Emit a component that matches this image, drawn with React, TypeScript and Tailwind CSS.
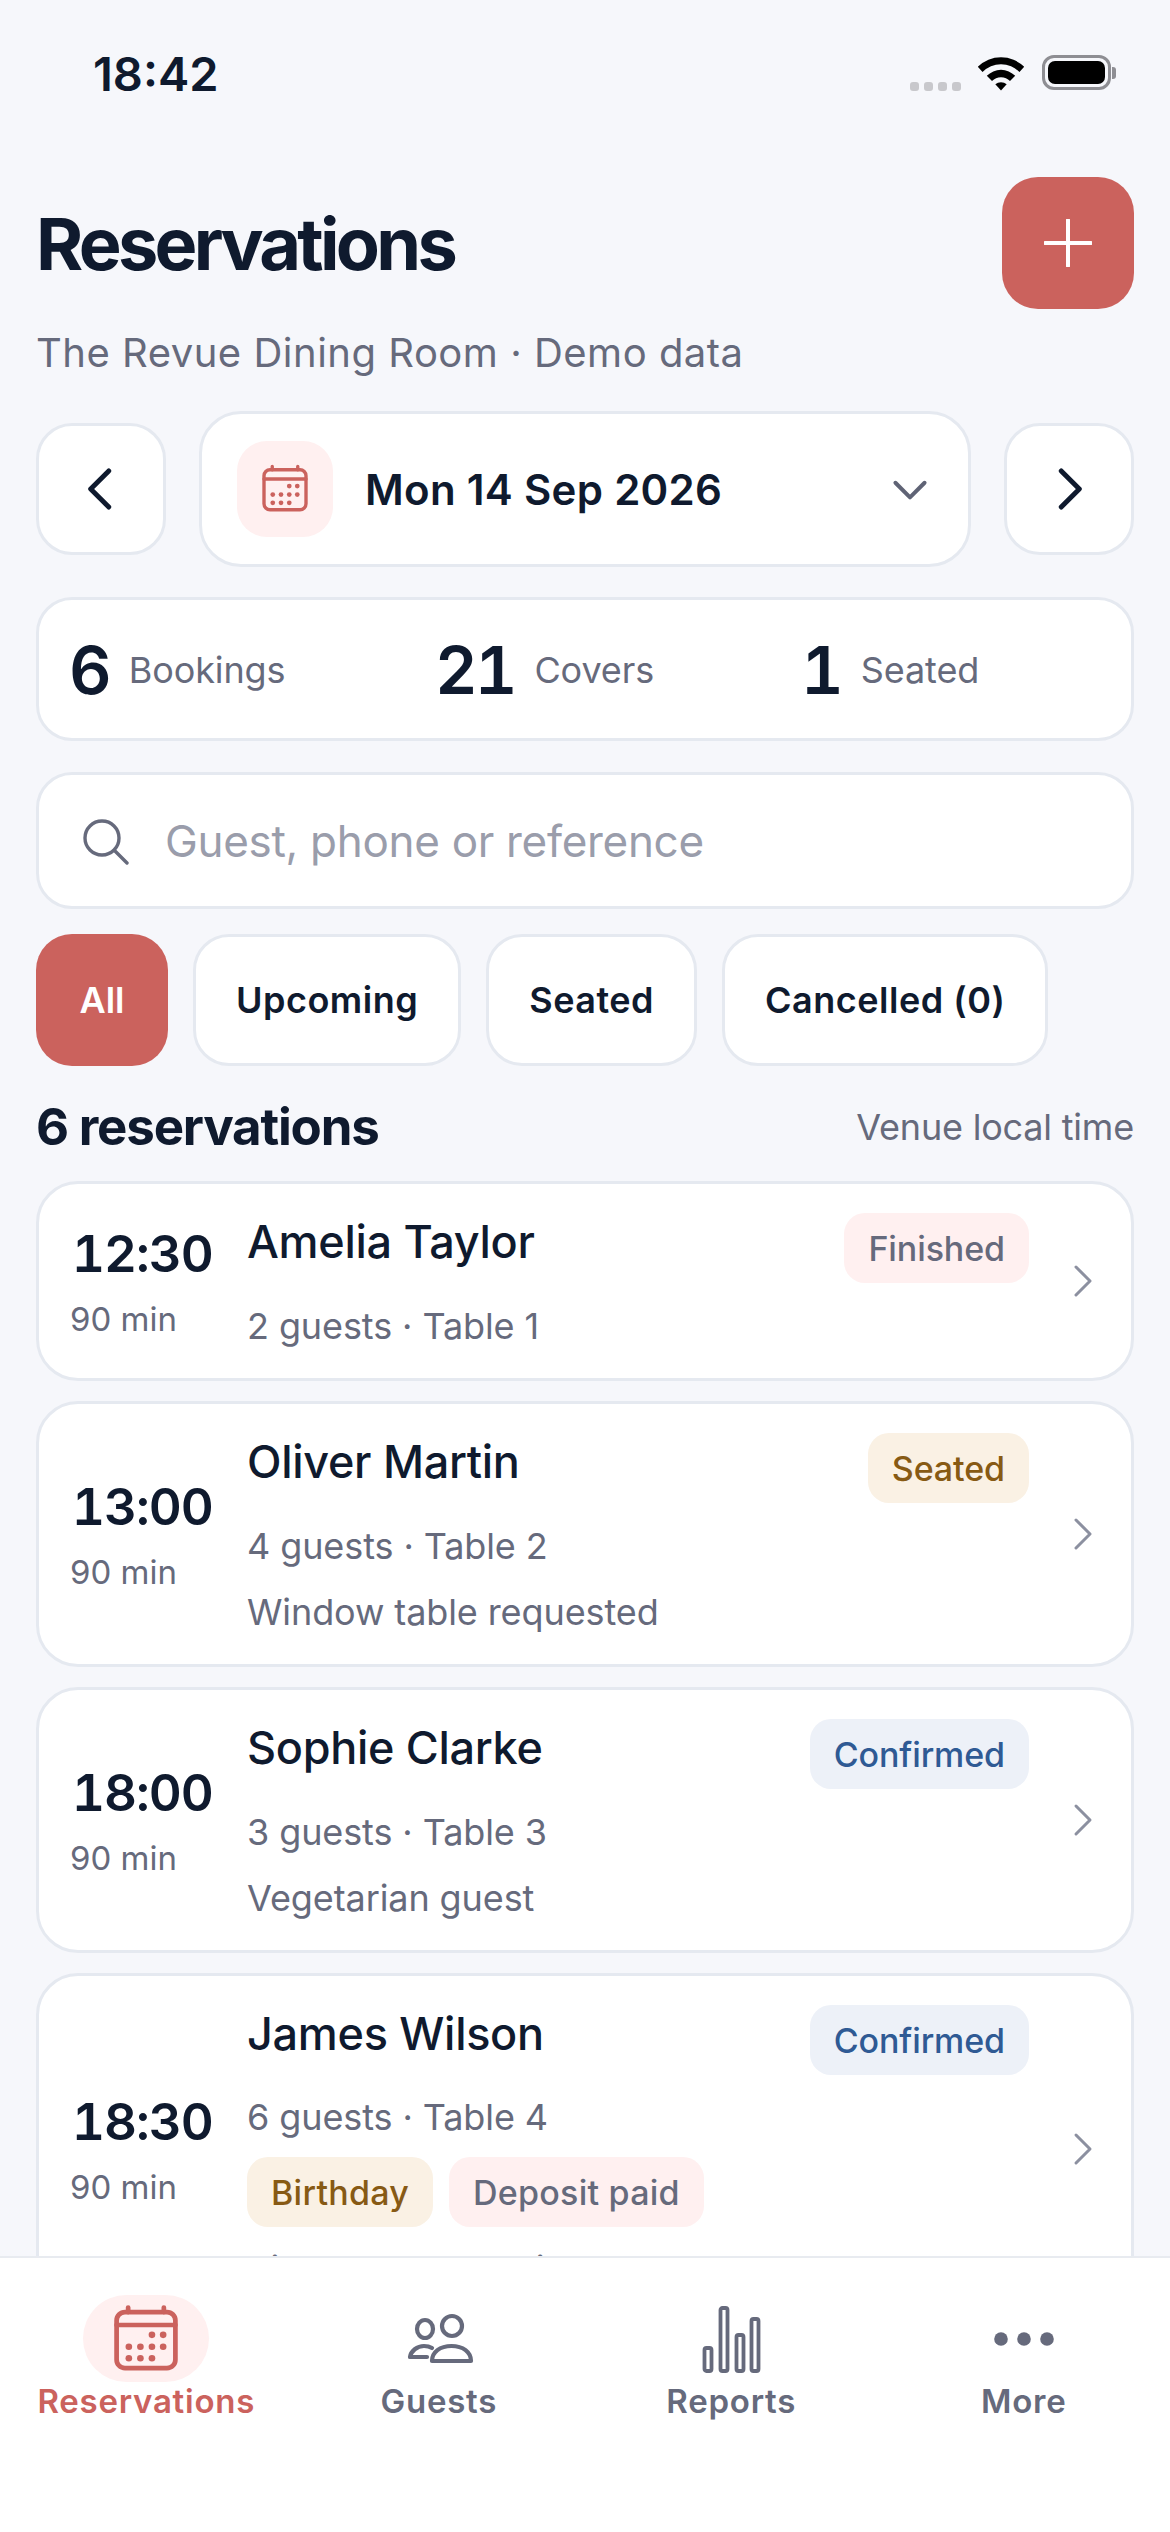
import React from "react";

const font = { fontFamily: "Inter, 'Noto Sans', sans-serif" };

function CalendarIcon({ className }: { className: string }) {
  const dots: [number, number][] = [
    [13.7, 10.8], [16.9, 10.8],
    [7.1, 14.2], [10.4, 14.2], [13.7, 14.2], [16.9, 14.2],
    [7.1, 17.5], [10.4, 17.5], [13.7, 17.5],
  ];
  return (
    <svg viewBox="0 0 24 24" fill="none" className={className} stroke="currentColor" strokeWidth="1.35">
      <rect x="3.6" y="4.3" width="16.8" height="16" rx="2.4" />
      <path d="M3.6 8h16.8M6.9 3v1.3M17.1 3v1.3" strokeLinecap="round" />
      {dots.map(([x, y]) => (
        <circle key={`${x}-${y}`} cx={x} cy={y} r="0.95" fill="currentColor" stroke="none" />
      ))}
    </svg>
  );
}

function Chevron({ dir, className, sw = 2 }: { dir: "left" | "right" | "down"; className: string; sw?: number }) {
  const d = dir === "left" ? "M15 5l-7 7 7 7" : dir === "right" ? "M9 5l7 7-7 7" : "M5 9l7 7 7-7";
  return (
    <svg viewBox="0 0 24 24" fill="none" stroke="currentColor" strokeWidth={sw} strokeLinecap="round" strokeLinejoin="round" className={className}>
      <path d={d} />
    </svg>
  );
}

function Badge({ tone, wide, children }: { tone: "red" | "amber" | "blue"; wide?: boolean; children: React.ReactNode }) {
  const cls =
    tone === "red"
      ? "bg-[#fff0f0] text-[#666a7c]"
      : tone === "amber"
      ? "bg-[#faf1e4] text-[#875a14]"
      : "bg-[#edf1f8] text-[#2f5a94]";
  return (
    <span className={`h-[70px] rounded-[21px] px-[24px] flex items-center text-[34px] font-medium whitespace-nowrap ${wide ? "tracking-[0.25px]" : "tracking-[-0.1px]"} ${cls}`}>
      {children}
    </span>
  );
}

function Card({
  time, name, meta, note, status, tone, tags, h,
}: {
  time: string; name: string; meta: string; note?: string; status: string; tone: "red" | "amber" | "blue";
  tags?: boolean; h: string;
}) {
  return (
    <div className={`shrink-0 bg-white border-[3px] border-[#e5e9f0] rounded-[42px] flex items-center pl-[33px] pr-[25px] ${h}`}>
      <div className="w-[175px] shrink-0 flex flex-col">
        <span className="text-[51px] leading-[60px] font-semibold text-[#0f1a2e] tabular-nums tracking-[-1px]">{time}</span>
        <span className="text-[33px] leading-[40px] mt-[15px] text-[#666a7c] -ml-[2px]">90 min</span>
      </div>
      <div className="flex-1 self-start pt-[29px] min-w-0">
        <div className="flex items-start justify-between">
          <span className="text-[45px] leading-[58px] font-medium text-[#0f1a2e] tracking-[-0.3px]">{name}</span>
          <Badge tone={tone}>{status}</Badge>
        </div>
        <div className={`${tags ? "mt-[18px]" : "mt-[19px]"} text-[36px] leading-[48px] text-[#666a7c] tracking-[-0.1px]`}>{meta}</div>
        {tags && (
          <div className="flex gap-[16px] mt-[16px]">
            <Badge tone="amber" wide>Birthday</Badge>
            <Badge tone="red" wide>Deposit paid</Badge>
          </div>
        )}
        {note && <div className="mt-[18px] text-[36px] leading-[48px] text-[#666a7c] tracking-[-0.1px] whitespace-nowrap">{note}</div>}
      </div>
      <Chevron dir="right" sw={1.5} className="w-[48px] h-[48px] ml-[29px] text-[#8c90a0] shrink-0" />
    </div>
  );
}

function Stat({ n, label, w }: { n: string; label: string; w: string }) {
  return (
    <div className={`flex items-center ${w}`}>
      <span className="text-[66px] leading-none font-semibold text-[#0f1a2e] tabular-nums tracking-[-3px]">{n}</span>
      <span className="ml-[20px] text-[36px] text-[#666a7c] tracking-[-0.1px]">{label}</span>
    </div>
  );
}

function Filter({ label, active }: { label: string; active?: boolean }) {
  return (
    <div
      className={
        active
          ? "h-[132px] w-[132px] rounded-[36px] bg-[#cb625d] text-white flex items-center justify-center text-[36px] font-semibold"
          : "h-[132px] px-[40px] rounded-[36px] bg-white border-[3px] border-[#e5e9f0] text-[#0f1a2e] flex items-center justify-center text-[36px] font-semibold tracking-[0.5px]"
      }
    >
      {label}
    </div>
  );
}

function Tab({ label, active, children }: { label: string; active?: boolean; children: React.ReactNode }) {
  return (
    <div className="flex-1 flex flex-col items-center">
      <div className={`w-[126px] h-[87px] rounded-full flex items-center justify-center ${active ? "bg-[#fff0f0] text-[#cb625d]" : "text-[#666a7c]"}`}>
        {children}
      </div>
      <span className={`text-[33px] leading-[40px] -mt-[1px] font-semibold tracking-[0.75px] ${active ? "text-[#cb625d]" : "text-[#666a7c]"}`}>{label}</span>
    </div>
  );
}

export default function App() {
  return (
    <div style={font} className="w-[1170px] h-[2532px] bg-[#f6f7fb] flex flex-col overflow-hidden">
      {/* status bar */}
      <div className="h-[147px] shrink-0 flex items-start justify-between pl-[93px] pr-[54px] pt-[46px]">
        <span className="text-[47px] leading-[56px] font-semibold text-[#0f1a2e]">18:42</span>
        <div className="flex items-start pt-[9px]">
          <div className="flex gap-[5px] mt-[27px] mr-[16px]">
            {[0, 1, 2, 3].map((i) => (
              <span key={i} className="w-[9px] h-[9px] rounded-[3px] bg-[#c8c8cc]" />
            ))}
          </div>
          <svg viewBox="0 0 50 38" className="w-[48px] h-[36px] mr-[17px]">
            <path d="M0.5 12.5 A35 35 0 0 1 49.5 12.5 L44.5 18 A27 27 0 0 0 5.5 18 Z" fill="#000" />
            <path d="M10 22 A21 21 0 0 1 40 22 L34.5 27.5 A13 13 0 0 0 15.5 27.5 Z" fill="#000" />
            <path d="M19 31 A9 9 0 0 1 31 31 L25 37.5 Z" fill="#000" />
          </svg>
          <div className="flex items-center">
            <div className="w-[69px] h-[35px] rounded-[12px] border-[3px] border-[#8e8e93] p-[3px]">
              <div className="w-full h-full rounded-[7px] bg-black" />
            </div>
            <span className="w-[4px] h-[12px] rounded-r-[3px] bg-[#8e8e93] ml-[1px]" />
          </div>
        </div>
      </div>

      {/* body */}
      <div className="flex-1 min-h-0 overflow-hidden px-[36px] flex flex-col">
        <div className="flex items-start justify-between shrink-0 pt-[30px]">
          <h1 className="text-[72px] leading-[84px] font-bold text-[#0f1a2e] tracking-[-3.7px] mt-[25px]">Reservations</h1>
          <div className="w-[132px] h-[132px] rounded-[36px] bg-[#cb625d] flex items-center justify-center">
            <svg viewBox="0 0 48 48" className="w-[48px] h-[48px]" stroke="#fff" strokeWidth="4" strokeLinecap="round">
              <path d="M24 1v46M1 24h46" />
            </svg>
          </div>
        </div>
        <p className="shrink-0 text-[40px] leading-[48px] text-[#666a7c] tracking-[0.5px] mt-[20px]">The Revue Dining Room · Demo data</p>

        <div className="shrink-0 mt-[34px] flex items-center gap-[33px]">
          <div className="w-[130px] h-[132px] rounded-[36px] bg-white border-[3px] border-[#e5e9f0] flex items-center justify-center">
            <Chevron dir="left" sw={1.9} className="w-[62px] h-[62px] text-[#0f1a2e]" />
          </div>
          <div className="flex-1 h-[156px] rounded-[42px] bg-white border-[3px] border-[#e5e9f0] flex items-center pl-[35px] pr-[33px]">
            <div className="w-[96px] h-[96px] rounded-[30px] bg-[#fff0f0] flex items-center justify-center text-[#cb625d]">
              <CalendarIcon className="w-[60px] h-[60px]" />
            </div>
            <span className="ml-[32px] text-[42px] font-semibold text-[#0f1a2e] tracking-[0.3px]">Mon 14 Sep 2026</span>
            <Chevron dir="down" sw={1.9} className="ml-auto w-[50px] h-[50px] text-[#5f6375]" />
          </div>
          <div className="w-[130px] h-[132px] rounded-[36px] bg-white border-[3px] border-[#e5e9f0] flex items-center justify-center">
            <Chevron dir="right" sw={1.9} className="w-[62px] h-[62px] text-[#0f1a2e]" />
          </div>
        </div>

        <div className="shrink-0 mt-[30px] h-[144px] rounded-[36px] bg-white border-[3px] border-[#e5e9f0] flex items-center pl-[30px] pt-[2px]">
          <Stat n="6" label="Bookings" w="w-[366px]" />
          <Stat n="21" label="Covers" w="w-[366px]" />
          <Stat n="1" label="Seated" w="w-[300px]" />
        </div>

        <div className="shrink-0 mt-[31px] h-[137px] rounded-[36px] bg-white border-[3px] border-[#e5e9f0] flex items-center pl-[42px]">
          <svg viewBox="0 0 48 48" className="w-[48px] h-[48px] text-[#666a7c]" fill="none" stroke="currentColor" strokeWidth="3.4" strokeLinecap="round">
            <circle cx="21" cy="21" r="17" />
            <path d="M33.5 33.5L46 46" />
          </svg>
          <span className="ml-[36px] text-[44px] text-[#9a9dab] tracking-[-0.3px]">Guest, phone or reference</span>
        </div>

        <div className="shrink-0 mt-[25px] flex gap-[25px]">
          <Filter label="All" active />
          <Filter label="Upcoming" />
          <Filter label="Seated" />
          <Filter label="Cancelled (0)" />
        </div>

        <div className="shrink-0 mt-[31px] h-[60px] flex items-center justify-between">
          <span className="text-[51px] font-bold text-[#0f1a2e] tracking-[-1.2px]">6 reservations</span>
          <span className="text-[36px] text-[#666a7c] tracking-[-0.2px]">Venue local time</span>
        </div>

        <div className="mt-[24px] flex flex-col gap-[20px]">
          <Card h="h-[200px]" time="12:30" name="Amelia Taylor" meta="2 guests · Table 1" status="Finished" tone="red" />
          <Card h="h-[266px]" time="13:00" name="Oliver Martin" meta="4 guests · Table 2" note="Window table requested" status="Seated" tone="amber" />
          <Card h="h-[266px]" time="18:00" name="Sophie Clarke" meta="3 guests · Table 3" note="Vegetarian guest" status="Confirmed" tone="blue" />
          <Card h="h-[352px]" time="18:30" name="James Wilson" meta="6 guests · Table 4" note="Birthday celebration" status="Confirmed" tone="blue" tags />
        </div>
      </div>

      {/* tab bar */}
      <div className="h-[276px] shrink-0 bg-white border-t-[2px] border-[#e8ebf0] flex pt-[37px] z-10">
        <Tab label="Reservations" active><CalendarIcon className="w-[84px] h-[84px]" /></Tab>
        <Tab label="Guests">
          <svg viewBox="0 0 72 72" className="w-[72px] h-[72px]" fill="none" stroke="currentColor" strokeWidth="4.2" strokeLinecap="round" strokeLinejoin="round">
            <ellipse cx="22" cy="26" rx="8" ry="9" />
            <circle cx="49" cy="23" r="10" />
            <path d="M29 45c-2.5-1.5-5-2-8-2-7 0-13 5-14 11h17" />
            <path d="M29 58c0-9 8-15 19.5-15S68 49 68 58z" />
          </svg>
        </Tab>
        <Tab label="Reports">
          <svg viewBox="0 0 60 68" className="w-[60px] h-[68px]" fill="none" stroke="currentColor" strokeWidth="3.8">
            <rect x="3.5" y="43" width="7" height="23" rx="2" />
            <rect x="19.5" y="3" width="7" height="63" rx="2" />
            <rect x="35.5" y="30" width="7" height="36" rx="2" />
            <rect x="50.5" y="14" width="7" height="52" rx="2" />
          </svg>
        </Tab>
        <Tab label="More">
          <svg viewBox="0 0 60 16" className="w-[60px] h-[16px]" fill="currentColor">
            <circle cx="7" cy="8" r="6.8" />
            <circle cx="30" cy="8" r="6.8" />
            <circle cx="53" cy="8" r="6.8" />
          </svg>
        </Tab>
      </div>
    </div>
  );
}
